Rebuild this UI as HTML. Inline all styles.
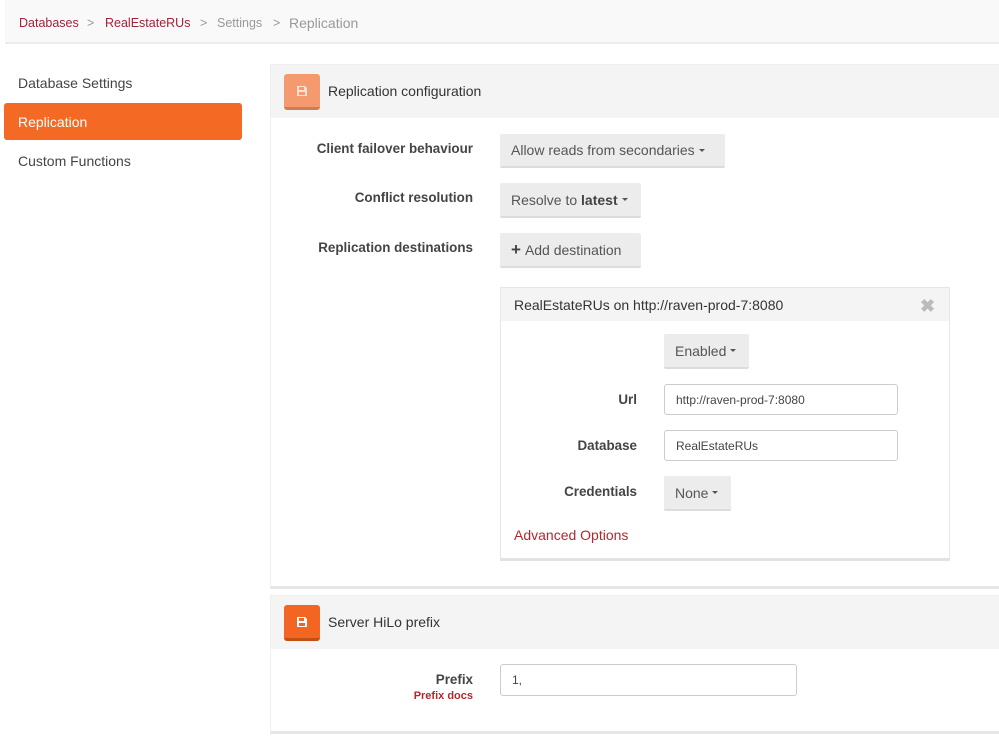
<!DOCTYPE html>
<html><head><style>
*{box-sizing:border-box;margin:0;padding:0}
body{width:999px;height:741px;background:#fff;font-family:"Liberation Sans",sans-serif;color:#333;position:relative;overflow:hidden;font-size:14px}
.a{position:absolute}
.bc{left:5px;top:0;width:994px;height:44px;background:#f9f9f9;border-bottom:2px solid #ececec;font-size:12.5px}
.bc span{position:absolute;top:16px}
.side{font-size:14px;color:#444}
.panel{background:#fff;border-top:1px solid #eee;border-bottom:3px solid #e6e6e6;border-left:1px solid #eee}
.ph{background:#f4f4f4}
.ib{width:36px;height:36px;border-radius:3px}
.lbl{width:220px;text-align:right;font-weight:bold;color:#444;font-size:13.4px;left:253px}
.btn{background:#ececec;border-bottom:2px solid #dcdcdc;border-radius:2px;color:#555;font-size:14px;padding:0 11px;display:flex;align-items:center;white-space:nowrap}
.car{display:inline-block;width:0;height:0;border-left:3px solid transparent;border-right:3px solid transparent;border-top:3px solid #555;margin-left:4px;vertical-align:middle}
.inp{border:1px solid #ccc;border-radius:3px;font-size:12px;color:#444;padding:0 11px;display:flex;align-items:center}
</style></head><body>
<div class="a bc">
<span style="left:14px;color:#a3213a">Databases</span>
<span style="left:82px;color:#999">&gt;</span>
<span style="left:100px;color:#a3213a">RealEstateRUs</span>
<span style="left:195px;color:#999">&gt;</span>
<span style="left:212px;color:#999">Settings</span>
<span style="left:268px;color:#999">&gt;</span>
<span style="left:284px;color:#999;font-size:14px;top:15px">Replication</span>
</div>
<div class="a side" style="left:18px;top:75px">Database Settings</div>
<div class="a" style="left:4px;top:103px;width:238px;height:37px;background:#f46a25;border-radius:3px;color:#fff;font-size:14px;padding:11px 0 0 14px">Replication</div>
<div class="a side" style="left:18px;top:153px">Custom Functions</div>

<div class="a panel" style="left:270px;top:64px;width:729px;height:525px"></div>
<div class="a ph" style="left:271px;top:65px;width:728px;height:53px"></div>
<div class="a ib" style="left:284px;top:74px;background:#f49a6e;border-bottom:3px solid #cf7d55"></div>
<svg class="a" style="left:296px;top:85px" width="12" height="12" viewBox="0 0 12 12"><path d="M1 1h8l2 2v8H1z" fill="#fde0d0"/><rect x="3" y="2" width="5" height="3" fill="#f49a6e"/><rect x="3" y="7" width="6" height="3" fill="#f49a6e"/></svg>
<div class="a" style="left:328px;top:83px;font-size:14px;color:#333">Replication configuration</div>

<div class="a lbl" style="top:141px">Client failover behaviour</div>
<div class="a btn" style="left:500px;top:134px;width:225px;height:34px">Allow reads from secondaries<span class="car"></span></div>
<div class="a lbl" style="top:190px">Conflict resolution</div>
<div class="a btn" style="left:500px;top:183px;width:141px;height:35px">Resolve to&nbsp;<b style="color:#444">latest</b><span class="car"></span></div>
<div class="a lbl" style="top:240px">Replication destinations</div>
<div class="a btn" style="left:500px;top:233px;width:141px;height:35px"><b style="font-size:17px;margin-right:4px;color:#444">+</b>Add destination</div>

<div class="a" style="left:500px;top:287px;width:450px;height:274px;border:1px solid #e6e6e6;border-bottom:3px solid #e2e2e2;background:#fff"></div>
<div class="a ph" style="left:501px;top:288px;width:448px;height:33px"></div>
<div class="a" style="left:514px;top:297px;font-size:14px;color:#333">RealEstateRUs on http://raven-prod-7:8080</div>
<div class="a" style="left:920px;top:296px;font-size:18px;color:#bbb;font-weight:bold">✖</div>
<div class="a btn" style="left:664px;top:334px;width:85px;height:35px">Enabled<span class="car"></span></div>
<div class="a" style="left:560px;top:392px;width:77px;text-align:right;font-weight:bold;color:#444;font-size:13.4px">Url</div>
<div class="a inp" style="left:664px;top:384px;width:234px;height:31px">http://raven-prod-7:8080</div>
<div class="a" style="left:537px;top:438px;width:100px;text-align:right;font-weight:bold;color:#444;font-size:13.4px">Database</div>
<div class="a inp" style="left:664px;top:430px;width:234px;height:31px">RealEstateRUs</div>
<div class="a" style="left:537px;top:484px;width:100px;text-align:right;font-weight:bold;color:#444;font-size:13.4px">Credentials</div>
<div class="a btn" style="left:664px;top:476px;width:67px;height:35px">None<span class="car"></span></div>
<div class="a" style="left:514px;top:527px;color:#b0292e;font-size:14px">Advanced Options</div>

<div class="a panel" style="left:270px;top:595px;width:729px;height:139px"></div>
<div class="a ph" style="left:271px;top:596px;width:728px;height:53px"></div>
<div class="a ib" style="left:284px;top:605px;background:#f26522;border-bottom:3px solid #c44f14"></div>
<svg class="a" style="left:296px;top:616px" width="12" height="12" viewBox="0 0 12 12"><path d="M1 1h8l2 2v8H1z" fill="#fff"/><rect x="3" y="2" width="5" height="3" fill="#f26522"/><rect x="3" y="7" width="6" height="3" fill="#f26522"/></svg>
<div class="a" style="left:328px;top:614px;font-size:14px;color:#333">Server HiLo prefix</div>
<div class="a lbl" style="top:672px">Prefix</div>
<div class="a" style="left:373px;top:690px;width:100px;text-align:right;font-size:11px;color:#b0292e;font-weight:bold">Prefix docs</div>
<div class="a inp" style="left:500px;top:664px;width:297px;height:32px">1,</div>
</body></html>
